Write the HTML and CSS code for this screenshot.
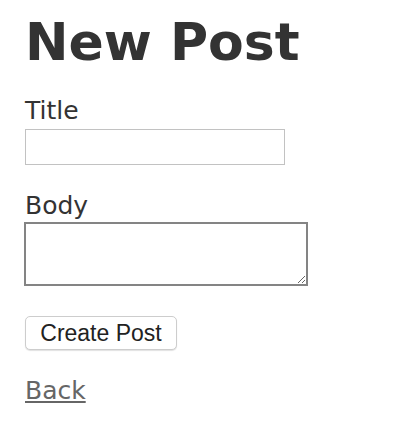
FILE: index.html
```html
<!DOCTYPE html>
<html lang="en">
<head>
<meta charset="utf-8">
<title>New Post</title>
<link rel="stylesheet" href="styles.css">
</head>
<body>
<main class="page">
  <h1 class="heading">New Post</h1>
  <form class="post-form">
    <label class="field-label" for="title">Title</label>
    <input class="text-input" type="text" id="title" name="title">
    <label class="field-label field-label--body" for="body">Body</label>
    <textarea class="text-area" id="body" name="body"></textarea>
    <button class="submit-btn" type="button">Create Post</button>
  </form>
  <a class="back-link" href="#">Back</a>
</main>
</body>
</html>
```

FILE: styles.css
```css
html, body {
  margin: 0;
  padding: 0;
  background: #ffffff;
}

.page {
  padding: 12px 0 0 24px;
  font-family: "DejaVu Sans", Verdana, sans-serif;
  color: #333333;
}

.heading {
  margin: 0;
  font-size: 52px;
  line-height: 60px;
  font-weight: bold;
  color: #333333;
  padding-left: 1px;
}

.post-form {
  display: flex;
  flex-direction: column;
  align-items: flex-start;
}

.field-label {
  display: block;
  margin-top: 25px;
  margin-left: 1px;
  font-size: 25px;
  line-height: 28px;
  color: #333333;
}

.field-label--body {
  margin-top: 27px;
}

.text-input {
  box-sizing: border-box;
  margin: 4px 0 0 1px;
  width: 260px;
  height: 36px;
  border: 1px solid #c2c2c2;
  padding: 2px 4px;
  font-size: 16px;
  background: #fff;
  outline: none;
}

.text-area {
  box-sizing: border-box;
  display: block;
  margin: 2px 0 0 0;
  width: 284px;
  height: 64px;
  border: 2px solid #848484;
  padding: 2px;
  font-size: 14px;
  background: #fff;
  resize: both;
  outline: none;
}

.submit-btn {
  box-sizing: border-box;
  margin: 30px 0 0 1px;
  width: 152px;
  height: 34px;
  padding: 0;
  border: 1px solid #cdcdcd;
  border-radius: 5px;
  background: #ffffff;
  box-shadow: 0 1px 1px rgba(0, 0, 0, 0.12);
  font-family: "Liberation Sans", Arial, sans-serif;
  font-size: 23px;
  color: #222222;
  cursor: pointer;
}

.back-link {
  display: inline-block;
  margin: 27px 0 0 1px;
  font-size: 25px;
  line-height: 28px;
  color: #666666;
  text-decoration: underline;
}
```
